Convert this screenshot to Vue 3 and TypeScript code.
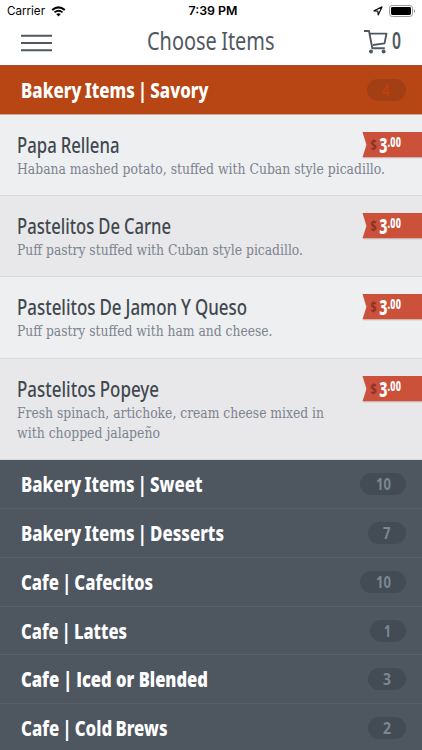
<script setup lang="ts">
interface Dish {
  name: string
  nameWidth: number
  lines: { text: string; width: number }[]
}

interface Category {
  name: string
  width: number
  count: string
  countWidth: number
  pill: number
}

const dishes: Dish[] = [
  { name: 'Papa Rellena', nameWidth: 102.5, lines: [{ text: 'Habana mashed potato, stuffed with Cuban style picadillo.', width: 368 }] },
  { name: 'Pastelitos De Carne', nameWidth: 154, lines: [{ text: 'Puff pastry stuffed with Cuban style picadillo.', width: 286 }] },
  { name: 'Pastelitos De Jamon Y Queso', nameWidth: 230, lines: [{ text: 'Puff pastry stuffed with ham and cheese.', width: 255.5 }] },
  {
    name: 'Pastelitos Popeye',
    nameWidth: 142,
    lines: [
      { text: 'Fresh spinach, artichoke, cream cheese mixed in', width: 307 },
      { text: 'with chopped jalapeño', width: 143 },
    ],
  },
]

const open: Category = { name: 'Bakery Items | Savory', width: 187.5, count: '4', countWidth: 8, pill: 39.5 }

const categories: Category[] = [
  { name: 'Bakery Items | Sweet', width: 181.5, count: '10', countWidth: 15, pill: 46 },
  { name: 'Bakery Items | Desserts', width: 203, count: '7', countWidth: 7.5, pill: 38 },
  { name: 'Cafe | Cafecitos', width: 132, count: '10', countWidth: 15, pill: 46 },
  { name: 'Cafe | Lattes', width: 106, count: '1', countWidth: 7, pill: 36.5 },
  { name: 'Cafe | Iced or Blended', width: 187, count: '3', countWidth: 8, pill: 38.5 },
  { name: 'Cafe | Cold Brews', width: 146.5, count: '2', countWidth: 8, pill: 38.5 },
]
</script>

<template>
  <main class="screen">
    <div class="status">
      <div class="carrier">
        <svg width="38" height="16"><text x="0" y="12" textLength="38" lengthAdjust="spacingAndGlyphs">Carrier</text></svg>
        <svg width="15" height="11" viewBox="0 0 15 11">
          <path d="M1.2 4.1Q7.5-1.3 13.8 4.1" fill="none" stroke="#000" stroke-width="2" />
          <path d="M3.5 6.4Q7.5 3.2 11.5 6.4" fill="none" stroke="#000" stroke-width="1.8" />
          <path d="M5.2 8.1Q7.5 6.4 9.8 8.1L7.5 10.5Z" />
        </svg>
      </div>
      <svg class="clock" width="50" height="16"><text x="1.5" y="12.3" textLength="49" lengthAdjust="spacingAndGlyphs">7:39 PM</text></svg>
      <div class="power">
        <svg width="10" height="10" viewBox="0 0 10 10"><path d="M9 .9L5.2 8.9L4.8 5.2L1 4.8Z" fill="none" stroke="#111" stroke-width="1.2" stroke-linejoin="round" /></svg>
        <svg width="27" height="12" viewBox="0 0 27 12">
          <rect x=".5" y=".5" width="23" height="11" rx="2.8" fill="none" stroke="#999" />
          <rect x="2" y="2" width="20" height="8" rx="1.4" />
          <path d="M25 4Q27.2 6 25 8Z" fill="#999" />
        </svg>
      </div>
    </div>

    <header class="nav">
      <svg class="menu" width="31" height="18" viewBox="0 0 31 18"><path d="M0 1.8H31M0 9H31M0 16.3H31" stroke="#505862" stroke-width="2" /></svg>
      <svg class="heading" width="127.5" height="32"><text x="0" y="24.5" textLength="127.5" lengthAdjust="spacingAndGlyphs">Choose Items</text></svg>
      <div class="cart">
        <svg width="25" height="24" viewBox="0 0 25 24" fill="none" stroke="#505862" stroke-width="1.9" stroke-linejoin="round">
          <path d="M1 1H6L9.3 18.2H21.8M6.5 3.6H23.5L21.5 13.4L10 15" />
          <circle cx="8" cy="21.6" r="2" fill="#505862" stroke="none" />
          <circle cx="20.6" cy="21.6" r="2" fill="#505862" stroke="none" />
        </svg>
        <svg width="9" height="24"><text x="0" y="19" textLength="9" lengthAdjust="spacingAndGlyphs">0</text></svg>
      </div>
    </header>

    <section class="category open">
      <svg class="label" :width="open.width" height="28"><text x="0" y="21.5" :textLength="open.width" lengthAdjust="spacingAndGlyphs">{{ open.name }}</text></svg>
      <span class="pill" :style="{ width: open.pill + 'px' }">
        <svg :width="open.countWidth" height="22"><text x="0" y="17" :textLength="open.countWidth" lengthAdjust="spacingAndGlyphs">{{ open.count }}</text></svg>
      </span>
    </section>

    <article v-for="dish in dishes" :key="dish.name" class="dish">
      <div class="copy">
        <svg class="name" :width="dish.nameWidth" height="27"><text x="0" y="20" :textLength="dish.nameWidth" lengthAdjust="spacingAndGlyphs">{{ dish.name }}</text></svg>
        <svg v-for="line in dish.lines" :key="line.text" class="line" :width="line.width" height="20.5"><text x="0" y="15" :textLength="line.width" lengthAdjust="spacingAndGlyphs">{{ line.text }}</text></svg>
      </div>
      <svg class="price" width="60" height="28" viewBox="0 0 60 28">
        <path d="M1 2H60V26.6H1L4.5 14.5Z" fill="#000" opacity=".1" />
        <path d="M.5 0H60V25.3H.5L4.5 12.7Z" fill="#cb513b" />
        <text class="dollar" x="8.3" y="17.5" textLength="6.5" lengthAdjust="spacingAndGlyphs">$</text>
        <text class="whole" transform="translate(17.2 20.8) scale(.68 1)">3<tspan class="cents" dy="-5.8">.00</tspan></text>
      </svg>
    </article>

    <section v-for="item in categories" :key="item.name" class="category">
      <svg class="label" :class="{ plain: item.name.includes('Iced') }" :width="item.width" height="28"><text x="0" y="21.5" :textLength="item.width" lengthAdjust="spacingAndGlyphs">{{ item.name }}</text></svg>
      <span class="pill" :style="{ width: item.pill + 'px' }">
        <svg :width="item.countWidth" height="22"><text x="0" y="17" :textLength="item.countWidth" lengthAdjust="spacingAndGlyphs">{{ item.count }}</text></svg>
      </span>
    </section>
  </main>
</template>

<style>
body {
  margin: 0;
  overflow: hidden;
}
</style>

<style scoped>
.screen {
  width: 422px;
  height: 750px;
  overflow: hidden;
  background: #fff;
  font-family: 'Noto Sans', sans-serif;
}

svg {
  display: block;
  flex: none;
  overflow: visible;
}

.status {
  display: grid;
  grid-template-columns: 1fr 50px 1fr;
  align-items: center;
  height: 22px;
  padding: 0 6px 0 7px;
  font: 12px Inter, sans-serif;
}

.carrier,
.power {
  display: flex;
  align-items: center;
  gap: 6px;
}

.power {
  justify-content: flex-end;
}

.clock {
  font-weight: 600;
}

.nav {
  display: grid;
  grid-template-columns: 126px 1fr auto;
  align-items: start;
  box-sizing: border-box;
  height: 43px;
  padding: 3px 21px 0;
}

.menu {
  margin-top: 9px;
}

.heading {
  font-size: 26px;
  font-weight: 400;
  word-spacing: -1px;
  fill: #505862;
}

.cart {
  display: flex;
  gap: 4px;
  margin-top: 5px;
  font-size: 23px;
  font-weight: 600;
  fill: #505862;
}

.category {
  display: flex;
  align-items: center;
  justify-content: space-between;
  box-sizing: border-box;
  height: 48.8px;
  padding: 0 16px 0 21px;
  border-bottom: 1px solid #59616b;
  background: #4e565f;
}

.open {
  height: 49.8px;
  border-top: 1px solid #a94c27;
  border-bottom-color: #c9a999;
  background: #b84615;
}

.label {
  font-size: 21px;
  font-weight: 800;
  word-spacing: -1.4px;
  fill: #fff;
}

.label text {
  transform: translateY(0.5px);
}

.plain {
  font-family: 'Open Sans', sans-serif;
  word-spacing: 0;
}

.pill {
  display: flex;
  justify-content: center;
  height: 22px;
  border-radius: 11px;
  background: #434b54;
  font-size: 16.5px;
  font-weight: 700;
  fill: #7b8793;
}

.open .pill {
  background: #a33f14;
  fill: #b84210;
}

.dish {
  display: flex;
  align-items: flex-start;
  justify-content: space-between;
  box-sizing: border-box;
  min-height: 81.3px;
  padding: 17.1px 0 15.5px 16.5px;
  border-bottom: 1px solid #d9dadc;
  background: #eeeff1;
}

.dish:nth-of-type(even) {
  background: #e8e8ea;
}

.copy {
  flex: none;
  width: 345px;
}

.name {
  font-size: 21px;
  font-weight: 500;
  word-spacing: -0.5px;
  fill: #41484f;
}

.name text {
  transform: translateY(0.5px);
}

.line {
  font-family: 'DejaVu Serif Condensed', 'DejaVu Serif', serif;
  font-size: 14px;
  fill: #7c838e;
}

.price {
  font-weight: 800;
}

.dollar {
  font-size: 13.5px;
  font-weight: 700;
  fill: #8c3325;
}

.whole {
  font-size: 21px;
  fill: #fff;
}

.cents {
  font-size: 13.3px;
  letter-spacing: 0.4px;
}
</style>
